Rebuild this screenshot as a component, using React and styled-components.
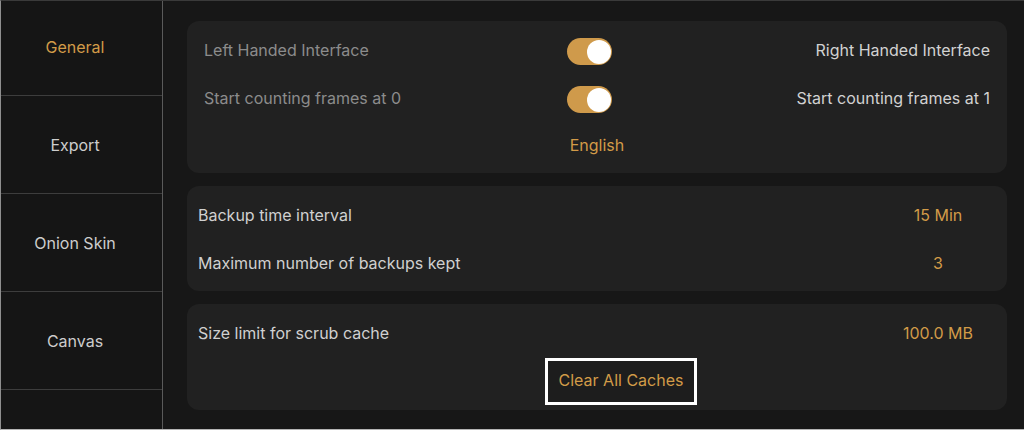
import styled, { createGlobalStyle } from 'styled-components'

const Global = createGlobalStyle`
  html, body {
    margin: 0;
    padding: 0;
    background: #171717;
  }
  * { box-sizing: border-box; }
`

const gold = '#d29b48'

const Screen = styled.div`
  width: 1024px;
  height: 430px;
  display: flex;
  background: #171717;
  border-top: 1px solid #3a3a3a;
  border-left: 1px solid #8f8f8f;
  border-bottom: 1px solid #b5b5b5;
  font-family: Inter, "Noto Sans", sans-serif;
  font-size: 16px;
  overflow: hidden;
`

const Sidebar = styled.div`
  width: 162px;
  flex-shrink: 0;
  background: #151515;
  border-right: 1px solid #5a5a5a;
  display: flex;
  flex-direction: column;
`

const NavItem = styled.div`
  height: 98px;
  display: flex;
  align-items: center;
  justify-content: center;
  padding-right: 13px;
  border-bottom: 1px solid #3d3d3d;
  color: ${p => (p.$active ? gold : '#cdcdcd')};
  font-size: 16px;
  &:first-child { height: 95px; padding-bottom: 2px; }
`

const Main = styled.div`
  flex: 1;
  padding: 20px 17px 0 24px;
  display: flex;
  flex-direction: column;
  gap: 13px;
`

const Card = styled.div`
  background: #212121;
  border-radius: 12px;
  padding: ${p => p.$pad};
  display: flex;
  flex-direction: column;
  gap: ${p => p.$gap};
`

const ToggleRow = styled.div`
  height: 27px;
  display: grid;
  grid-template-columns: 363px 45px 1fr;
  align-items: center;
`

const Dim = styled.span`
  color: #8c8c8c;
  padding-bottom: 3px;
`

const Bright = styled.span`
  color: #d2d2d2;
  text-align: right;
  padding-bottom: 3px;
`

const Switch = styled.div`
  width: 45px;
  height: 27px;
  border-radius: 14px;
  background: #cf9a4b;
  position: relative;
  &::after {
    content: '';
    position: absolute;
    top: 1.5px;
    right: 1.5px;
    width: 24px;
    height: 24px;
    border-radius: 50%;
    background: #fff;
  }
`

const Lang = styled.div`
  height: 20px;
  margin-top: 1px;
  text-align: center;
  color: ${gold};
  line-height: 20px;
`

const Row = styled.div`
  height: 24px;
  display: grid;
  grid-template-columns: 1fr 100px;
  align-items: center;
  color: #d0d0d0;
`

const Value = styled.span`
  color: ${gold};
  text-align: center;
`

const ClearButton = styled.button`
  align-self: center;
  margin-left: 56px;
  width: 152px;
  height: 47px;
  background: #1d1d1d;
  border: 3px solid #ffffff;
  color: ${gold};
  font-family: inherit;
  font-size: 16px;
  padding: 0 0 3px;
`

const toggles = [
  ['Left Handed Interface', 'Right Handed Interface'],
  ['Start counting frames at 0', 'Start counting frames at 1'],
]

export default function App() {
  return (
    <>
      <Global />
      <Screen>
        <Sidebar>
          <NavItem $active>General</NavItem>
          <NavItem>Export</NavItem>
          <NavItem>Onion Skin</NavItem>
          <NavItem>Canvas</NavItem>
        </Sidebar>
        <Main>
          <Card $pad="17px 17px 18px" $gap="21px">
            {toggles.map(([l, r]) => (
              <ToggleRow key={l}>
                <Dim>{l}</Dim>
                <Switch />
                <Bright>{r}</Bright>
              </ToggleRow>
            ))}
            <Lang>English</Lang>
          </Card>
          <Card $pad="17px 19px 16px 11px" $gap="24px">
            <Row>
              <span>Backup time interval</span>
              <Value>15 Min</Value>
            </Row>
            <Row>
              <span>Maximum number of backups kept</span>
              <Value>3</Value>
            </Row>
          </Card>
          <Card $pad="17px 19px 5px 11px" $gap="13px">
            <Row>
              <span>Size limit for scrub cache</span>
              <Value>100.0 MB</Value>
            </Row>
            <ClearButton>Clear All Caches</ClearButton>
          </Card>
        </Main>
      </Screen>
    </>
  )
}
